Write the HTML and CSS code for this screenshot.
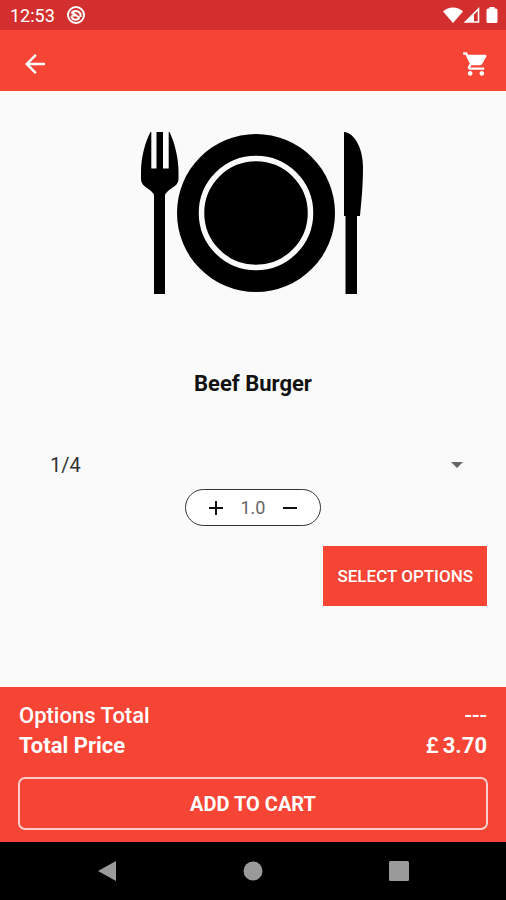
FILE: index.html
```html
<!DOCTYPE html>
<html lang="en">
<head>
  <meta charset="UTF-8">
  <meta name="viewport" content="width=device-width, initial-scale=1.0">
  <title>Beef Burger</title>
  <link rel="stylesheet" href="styles.css">
</head>
<body>

  <!-- STATUS BAR -->
  <div class="status-bar">
    <span class="status-time">12:53</span>
    <svg class="status-app" width="20" height="20" viewBox="0 0 20 20" fill="none" stroke="currentColor" stroke-width="2">
      <circle cx="10" cy="10" r="8"/>
      <path d="M5.500 8.500C7 5 12.500 5 14.500 9v3M5 11.500c2 4 6 4 8.500 1.500M6.500 7.500l7 5.500M5.500 10.500h4"/>
    </svg>
    <div class="status-icons">
      <svg width="20" height="16" viewBox="0 0 20 16" fill="currentColor">
        <path d="M0 4.500C5.500-.7 14.500-.7 20 4.500L10 16z"/>
      </svg>
      <svg width="17" height="16" viewBox="0 0 17 16">
        <path d="M15.500 2v13H2.500z" fill="none" stroke="currentColor" stroke-width="1.600"/>
        <path d="M11 6.500V15H2.500z" fill="currentColor"/>
      </svg>
      <svg class="status-battery" width="12" height="16" viewBox="0 0 12 16" fill="currentColor">
        <path d="M3.500 0h5v1.500H10a1.500 1.500 0 0 1 1.500 1.500v11.500A1.500 1.500 0 0 1 10 16H2a1.500 1.500 0 0 1-1.500-1.500V3A1.500 1.500 0 0 1 2 1.500h1.500z"/>
      </svg>
    </div>
  </div>

  <!-- APP BAR -->
  <header class="app-bar">
    <button class="icon-btn" type="button" aria-label="Back">
      <svg width="30" height="30" viewBox="0 0 24 24" fill="currentColor">
        <path d="M20 11H7.830l5.590-5.590L12 4l-8 8 8 8 1.410-1.410L7.830 13H20z"/>
      </svg>
    </button>
    <button class="icon-btn" type="button" aria-label="Cart">
      <svg width="28" height="28" viewBox="0 0 24 24" fill="currentColor">
        <path d="M7 18c-1.100 0-1.990.9-1.990 2S5.900 22 7 22s2-.9 2-2-.9-2-2-2zM1 2v2h2l3.600 7.590-1.350 2.450c-.16.280-.25.610-.25.960 0 1.100.9 2 2 2h12v-2H7.420c-.14 0-.25-.11-.25-.25l.03-.12.9-1.630h7.450c.75 0 1.410-.41 1.750-1.030l3.580-6.490A1 1 0 0 0 20 4H5.210l-.94-2H1zm16 16c-1.100 0-1.990.9-1.990 2s.89 2 1.990 2 2-.9 2-2-.9-2-2-2z"/>
      </svg>
    </button>
  </header>

  <!-- PRODUCT -->
  <main class="product">
    <svg class="product-image" width="224" height="162" viewBox="0 0 224 162" role="img" aria-label="Plate with fork and knife">
      <path d="M9.500 0H10.300V36.500H15.500V0H22V36.500H27.700V0H28.500C33 9 37.500 25 37.500 39V47C37.500 53 32 55 27 59Q24 61.500 24 64V162H13V64Q13 61.500 10 59C5 55 0 53 0 47V39C0 25 4.500 9 9.500 0z"/>
      <circle cx="115" cy="81" r="79"/>
      <circle cx="115" cy="81" r="54.500" fill="none" stroke="#fafafa" stroke-width="5.500"/>
      <path d="M203 0C214 1 222 17 222 35C222 54 220.500 68 219 84H216V162H204.500V84H203z"/>
    </svg>

    <h1 class="product-name">Beef Burger</h1>

    <div class="portion">
      <select class="portion-select" aria-label="Portion">
        <option>1/4</option>
      </select>
      <svg class="portion-arrow" width="12" height="6" viewBox="0 0 12 6" fill="#666"><path d="M0 0h12L6 6z"/></svg>
    </div>

    <div class="quantity">
      <button class="quantity-btn" type="button" aria-label="Increase">
        <svg width="16" height="16" viewBox="0 0 16 16" stroke="#111" stroke-width="2"><path d="M1 8h14M8 1v14"/></svg>
      </button>
      <span class="quantity-value">1.0</span>
      <button class="quantity-btn" type="button" aria-label="Decrease">
        <svg width="16" height="16" viewBox="0 0 16 16" stroke="#111" stroke-width="2"><path d="M1 8h14"/></svg>
      </button>
    </div>

    <button class="options-btn" type="button">SELECT OPTIONS</button>
  </main>

  <!-- TOTALS -->
  <footer class="totals">
    <div class="totals-row">
      <span>Options Total</span>
      <span>---</span>
    </div>
    <div class="totals-row totals-price">
      <span>Total Price</span>
      <span class="price"><span class="currency">£</span>3.70</span>
    </div>
    <button class="cart-btn" type="button">ADD TO CART</button>
  </footer>

  <!-- SYSTEM NAVIGATION -->
  <nav class="system-nav">
    <button class="system-btn" type="button" aria-label="System back">
      <svg width="20" height="20" viewBox="0 0 20 20" fill="currentColor"><path d="M19 0v20L1 10z"/></svg>
    </button>
    <button class="system-btn" type="button" aria-label="Home">
      <svg width="20" height="20" viewBox="0 0 20 20" fill="currentColor"><circle cx="10" cy="10" r="9.500"/></svg>
    </button>
    <button class="system-btn" type="button" aria-label="Recent apps">
      <svg width="20" height="20" viewBox="0 0 20 20" fill="currentColor"><rect width="20" height="20" rx="1.500"/></svg>
    </button>
  </nav>

</body>
</html>
```
FILE: styles.css
```css
:root {
  --primary: #f64435;
  --primary-dark: #d32f2f;
  --page-bg: #fafafa;
}

* { box-sizing: border-box; }

body {
  margin: 0;
  min-height: 100vh;
  display: flex;
  flex-direction: column;
  background: var(--page-bg);
  font-family: Roboto, sans-serif;
}

button {
  border: 0;
  padding: 0;
  background: none;
  color: inherit;
  font-family: inherit;
  cursor: pointer;
}

svg { display: block; }

.status-bar {
  display: flex;
  align-items: center;
  height: 30px;
  padding: 0 8px 0 10px;
  background: var(--primary-dark);
  color: #fff;
}
.status-time {
  font-size: 18px;
}
.status-app {
  margin-left: 11px;
}
.status-icons {
  display: flex;
  margin-left: auto;
}
.status-battery {
  margin-left: 6px;
}

.app-bar {
  display: flex;
  align-items: center;
  justify-content: space-between;
  height: 61px;
  padding: 7px 16px 0 20px;
  background: var(--primary);
  color: #fff;
}

.product {
  flex: 1;
  display: flex;
  flex-direction: column;
  align-items: center;
  padding: 41px 19px 0;
}
.product-image {
  margin-bottom: 77px;
}
.product-name {
  margin: 0;
  font-size: 22px;
  line-height: 26px;
  font-weight: bold;
  color: #111;
}

.portion {
  display: flex;
  align-items: center;
  width: 100%;
  margin-top: 55px;
  padding: 0 24px 0 31px;
}
.portion-select {
  flex: 1;
  height: 26px;
  border: 0;
  padding: 0;
  appearance: none;
  background: none;
  color: #333;
  font-family: inherit;
  font-size: 20px;
}
.portion-arrow {
  pointer-events: none;
}

.quantity {
  display: flex;
  align-items: center;
  gap: 17px;
  height: 37px;
  margin-top: 11px;
  padding: 0 22px;
  border: 1px solid #333;
  border-radius: 19px;
  background: #fff;
}
.quantity-value {
  color: #666;
  font-size: 18px;
}

.options-btn {
  align-self: flex-end;
  margin: 20px 0;
  padding: 20px 14px;
  background: var(--primary);
  color: #fff;
  font-size: 17px;
  line-height: 20px;
  font-weight: 500;
}

.totals {
  padding: 14px 18px 12px;
  background: var(--primary);
  color: #fff;
}
.totals-row {
  display: flex;
  justify-content: space-between;
  padding: 0 1px;
  font-size: 22px;
  line-height: 30px;
  font-weight: 500;
}
.totals-price {
  font-weight: bold;
}
.price {
  display: flex;
  gap: 4px;
}
.currency {
  font-weight: 500;
}
.cart-btn {
  width: 100%;
  margin-top: 16px;
  padding: 15px 14px 13px;
  border: 2px solid #fcc;
  border-radius: 7px;
  font-size: 20px;
  line-height: 21px;
  font-weight: bold;
}

.system-nav {
  display: flex;
  justify-content: space-around;
  height: 58px;
  padding: 0 34px;
  background: #000;
  color: #9a9a9a;
}
.system-btn {
  padding: 0 8px;
}
```
